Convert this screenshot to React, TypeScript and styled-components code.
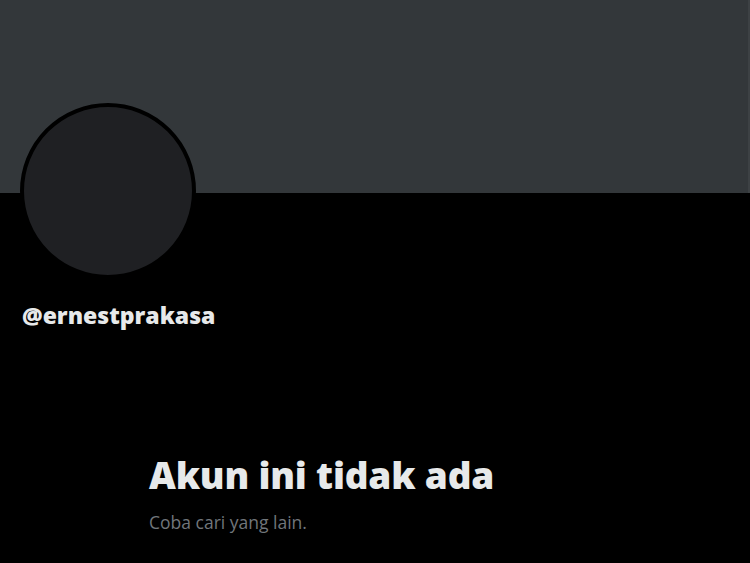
import styled, { createGlobalStyle } from 'styled-components';

const GlobalStyle = createGlobalStyle`
  html, body {
    margin: 0;
    padding: 0;
    background: #000;
    font-family: "Open Sans", "Liberation Sans", sans-serif;
  }
`;

const Page = styled.div`
  width: 750px;
  height: 563px;
  background: #000;
  overflow: hidden;
`;

const Banner = styled.div`
  height: 193px;
  background: #33373a;
  border-right: 2px solid #3d4144;
  box-sizing: border-box;
`;

const Profile = styled.div`
  padding: 0 22px;
`;

const Avatar = styled.div`
  width: 168px;
  height: 168px;
  margin-top: -90px;
  margin-left: -2px;
  border-radius: 50%;
  background: #1f2023;
  border: 4px solid #000;
`;

const Handle = styled.div`
  margin-top: 22px;
  font-size: 23px;
  font-weight: 800;
  color: #e7e9ea;
  line-height: 28px;
`;

const Empty = styled.div`
  padding: 124px 0 0 149px;
`;

const Title = styled.h1`
  margin: 0;
  font-size: 37px;
  font-weight: 800;
  color: #e7e9ea;
  line-height: 44px;
  letter-spacing: -0.2px;
`;

const Sub = styled.p`
  margin: 13px 0 0;
  font-size: 17.5px;
  color: #71767b;
  line-height: 24px;
`;

export default function App() {
  return (
    <Page>
      <GlobalStyle />
      <Banner />
      <Profile>
        <Avatar />
        <Handle>@ernestprakasa</Handle>
      </Profile>
      <Empty>
        <Title>Akun ini tidak ada</Title>
        <Sub>Coba cari yang lain.</Sub>
      </Empty>
    </Page>
  );
}
